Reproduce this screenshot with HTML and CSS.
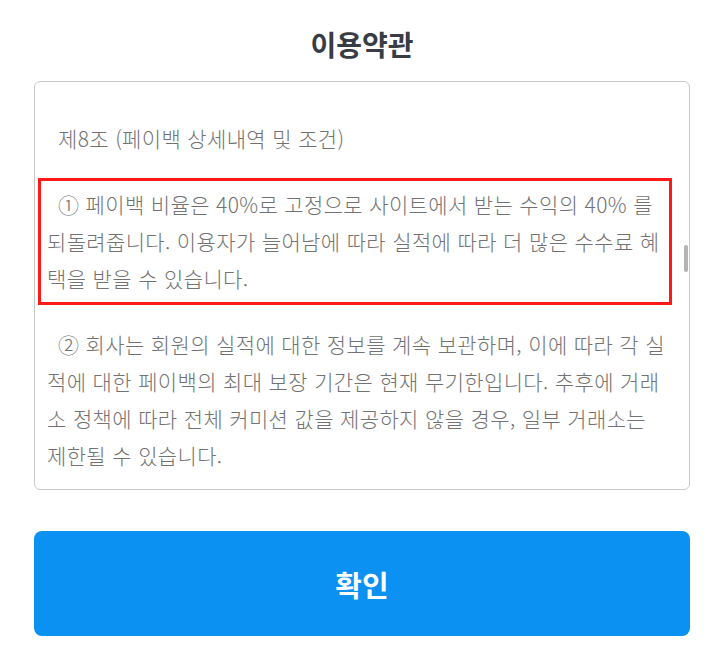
FILE: index.html
```html
<!DOCTYPE html>
<html lang="ko">
<head>
<meta charset="utf-8">
<title>이용약관</title>
<link rel="stylesheet" href="styles.css">
</head>
<body>
<div class="page">
  <h1 class="title">이용약관</h1>
  <div class="terms">
    <div class="terms-body">
      <p class="clause">제8조 (페이백 상세내역 및 조건)</p>
      <p class="clause clause-highlight">① 페이백 비율은 40%로 고정으로 사이트에서 받는 수익의 40% 를<br>되돌려줍니다. 이용자가 늘어남에 따라 실적에 따라 더 많은 수수료 혜<br>택을 받을 수 있습니다.</p>
      <p class="clause">② 회사는 회원의 실적에 대한 정보를 계속 보관하며, 이에 따라 각 실<br>적에 대한 페이백의 최대 보장 기간은 현재 무기한입니다. 추후에 거래<br>소 정책에 따라 전체 커미션 값을 제공하지 않을 경우, 일부 거래소는<br>제한될 수 있습니다.</p>
    </div>
    <div class="scroll-thumb"></div>
  </div>
  <button class="confirm" type="button">확인</button>
</div>
</body>
</html>
```

FILE: styles.css
```css
html, body {
  margin: 0;
  padding: 0;
  background: #ffffff;
}

body {
  font-family: "Noto Sans CJK KR", "Noto Sans", sans-serif;
}

.page {
  display: flex;
  flex-direction: column;
  padding: 26px 30px 0 34px;
}

.title {
  margin: 0 0 19px;
  text-align: center;
  font-size: 28px;
  line-height: 36px;
  font-weight: 700;
  color: #383c44;
}

.terms {
  position: relative;
  box-sizing: border-box;
  height: 409px;
  border: 1px solid #c9c9c9;
  border-radius: 6px;
  overflow: hidden;
}

.terms-body {
  padding: 30px 17px 0 3px;
}

.clause {
  margin: 0 0 13px;
  border: 3px solid transparent;
  padding: 5px 6px;
  font-size: 21px;
  line-height: 37px;
  letter-spacing: 0.35px;
  font-weight: 300;
  color: #727272;
  text-indent: 11px;
  white-space: nowrap;
}

.clause-highlight {
  border-color: #ff1a1a;
}

.scroll-thumb {
  position: absolute;
  top: 163px;
  right: 1px;
  width: 4px;
  height: 27px;
  border-radius: 2px;
  background: #b3b3b3;
}

.confirm {
  margin-top: 41px;
  height: 105px;
  border: none;
  border-radius: 8px;
  background: #0a91f2;
  color: #ffffff;
  font-family: "Noto Sans CJK KR", "Noto Sans", sans-serif;
  font-size: 29px;
  font-weight: 700;
  cursor: pointer;
}
```
